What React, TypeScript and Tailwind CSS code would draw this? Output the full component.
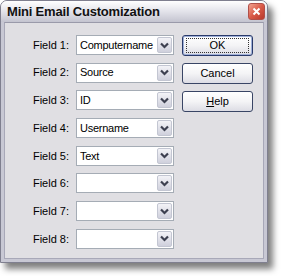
import React from "react";

const fields = ["Computername", "Source", "ID", "Username", "Text", "", "", ""];

function Chevron() {
  return (
    <svg width="9" height="7" viewBox="0 0 9 7">
      <path d="M1 1.5 L4.5 5 L8 1.5" fill="none" stroke="#3d4050" strokeWidth="2.2" />
    </svg>
  );
}

function Combo({ value }: { value: string }) {
  return (
    <div className="flex h-[20px] w-[98px] items-stretch border border-[#a5acb5] bg-white">
      <div className="flex flex-1 items-center overflow-hidden whitespace-nowrap pl-[3px] text-[11px] tracking-[-0.25px] text-black">{value}</div>
      <div className="m-[1px] flex w-[15px] items-center justify-center rounded-[2px] border border-[#c3c6d2] bg-gradient-to-b from-[#f3f3f7] to-[#cfd0dc]">
        <Chevron />
      </div>
    </div>
  );
}

function XpButton({ children, isDefault }: { children: React.ReactNode; isDefault?: boolean }) {
  return (
    <div
      className={
        "flex h-[21px] w-[71px] items-center justify-center rounded-[3px] border bg-gradient-to-b from-[#ffffff] via-[#f4f4f6] to-[#dcdce4] text-[11px] text-black " +
        (isDefault ? "border-[#2a3a6a] shadow-[inset_0_0_0_1px_#9fb0d8]" : "border-[#394565]")
      }
    >
      {isDefault ? (
        <div className="flex h-[15px] w-[63px] items-center justify-center border border-dotted border-[#333]">{children}</div>
      ) : (
        children
      )}
    </div>
  );
}

export default function App() {
  return (
    <div className="h-[276px] w-[281px] bg-white" style={{ fontFamily: '"Liberation Sans", Arial, sans-serif' }}>
      <div className="flex h-[263px] w-[268px] flex-col overflow-hidden rounded-t-[7px] border border-[#7f7f8f] bg-[#e0dfe3] shadow-[5px_6px_6px_rgba(0,0,0,0.5)]">
        {/* title bar */}
        <div className="flex h-[21px] shrink-0 items-center justify-between bg-gradient-to-b from-[#ffffff] via-[#e3e3ea] to-[#c4c4d0] pl-[6px] pr-[2px]">
          <span className="text-[13px] font-bold tracking-[-0.2px] text-[#111]">Mini Email Customization</span>
          <div className="flex h-[17px] w-[17px] items-center justify-center rounded-[3px] border border-[#b0504a] bg-gradient-to-br from-[#f0a090] via-[#d95a48] to-[#b8382c]">
            <svg width="9" height="9" viewBox="0 0 9 9">
              <path d="M1.5 1.5 L7.5 7.5 M7.5 1.5 L1.5 7.5" stroke="white" strokeWidth="2" />
            </svg>
          </div>
        </div>
        {/* client area */}
        <div className="flex flex-1 border-x-[3px] border-b-[3px] border-[#c8c8d4]">
          <div className="flex flex-1 border border-[#a8a8b8] border-t-[#9a9aaa] pl-[24px] pt-[12px]">
            <div className="flex flex-col gap-[7.7px]">
              {fields.map((v, i) => (
                <div key={i} className="flex items-center gap-[7px]">
                  <span className="w-[40px] text-right text-[11px] text-black">Field {i + 1}:</span>
                  <Combo value={v} />
                </div>
              ))}
            </div>
            <div className="ml-[8px] flex flex-col gap-[7px]">
              <XpButton isDefault>OK</XpButton>
              <XpButton>Cancel</XpButton>
              <XpButton>
                <span>
                  <span className="underline">H</span>elp
                </span>
              </XpButton>
            </div>
          </div>
        </div>
      </div>
    </div>
  );
}
